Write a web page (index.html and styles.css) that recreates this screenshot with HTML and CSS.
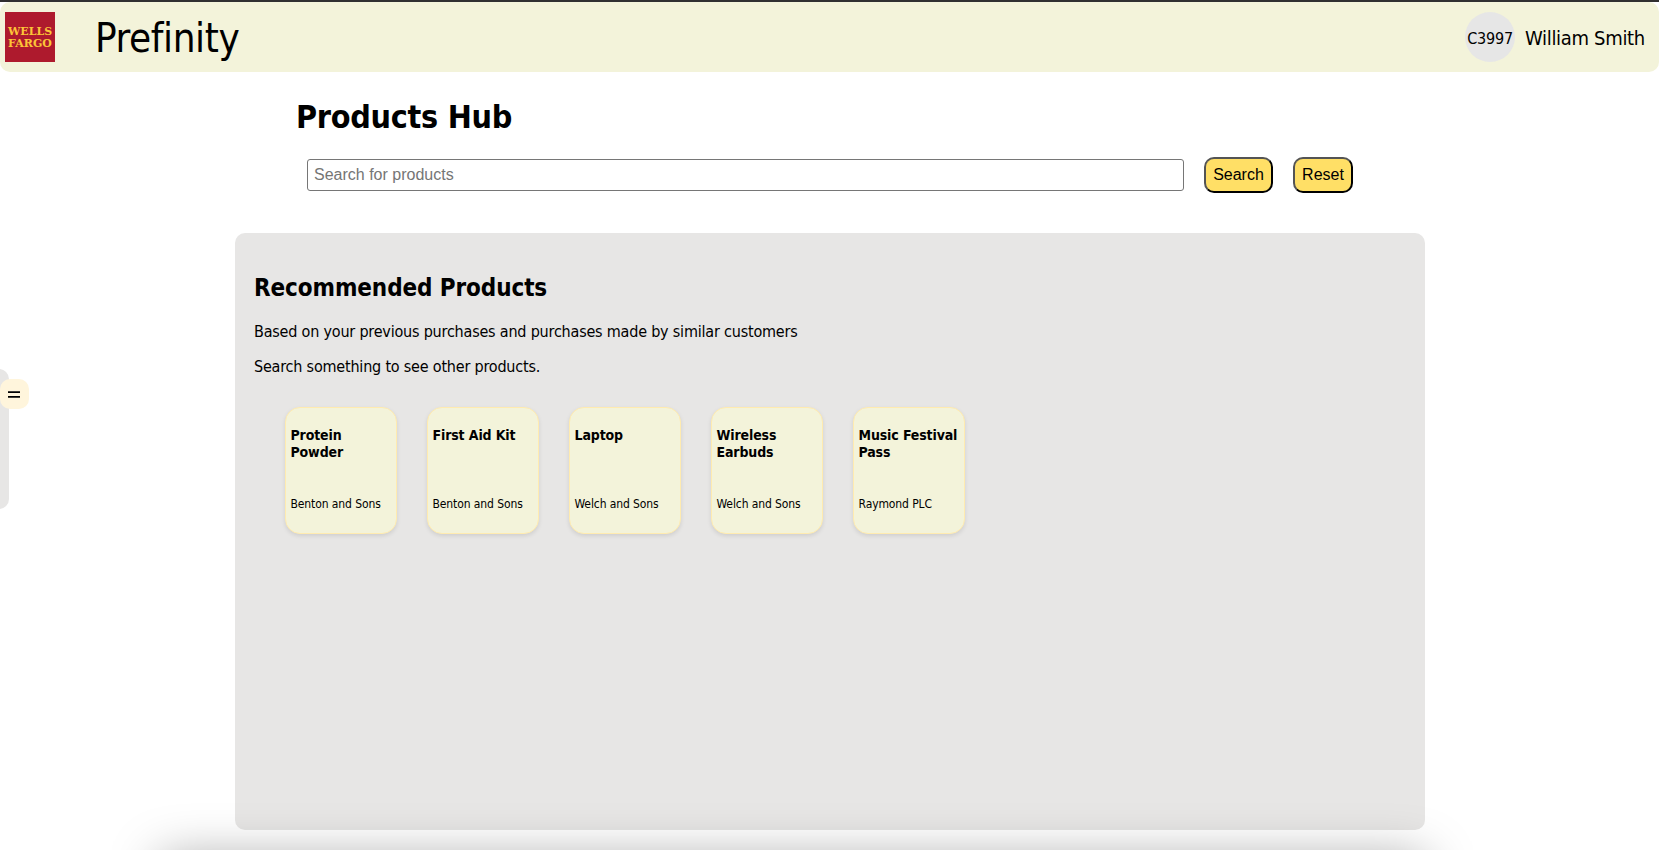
FILE: index.html
```html
<!DOCTYPE html>
<html lang="en">
<head>
<meta charset="utf-8">
<title>Prefinity</title>
<link rel="stylesheet" href="styles.css">
</head>
<body>
<div class="page">
<header class="header">
  <div class="logo"><span class="logo-line">WELLS</span><span class="logo-line">FARGO</span></div>
  <div class="brand">Prefinity</div>
  <div class="user">
    <div class="avatar"><span class="avatar-id">C3997</span></div>
    <div class="user-name">William Smith</div>
  </div>
</header>
<aside class="drawer"><button class="drawer-toggle" aria-label="Menu"><svg width="12" height="8" viewBox="0 0 12 8"><path d="M0 1.2H12M0 5.9H12" stroke="#000" stroke-width="1.7"/></svg></button></aside>
<main class="main">
  <h1 class="title">Products Hub</h1>
  <form class="search">
    <input class="search-input" type="text" placeholder="Search for products">
    <button class="btn btn-search" type="button">Search</button>
    <button class="btn btn-reset" type="button">Reset</button>
  </form>
  <section class="panel">
    <h2 class="panel-title">Recommended Products</h2>
    <p class="text based">Based on your previous purchases and purchases made by similar customers</p>
    <p class="text">Search something to see other products.</p>
    <div class="cards">
      <article class="card"><h3 class="card-title">Protein Powder</h3><p class="vendor">Benton and Sons</p></article>
      <article class="card"><h3 class="card-title">First Aid Kit</h3><p class="vendor">Benton and Sons</p></article>
      <article class="card"><h3 class="card-title">Laptop</h3><p class="vendor">Welch and Sons</p></article>
      <article class="card"><h3 class="card-title">Wireless Earbuds</h3><p class="vendor">Welch and Sons</p></article>
      <article class="card"><h3 class="card-title">Music Festival Pass</h3><p class="vendor">Raymond PLC</p></article>
    </div>
  </section>
</main>
<div class="bottom-shade"></div>
</div>
</body>
</html>
```
FILE: styles.css
```css
* { box-sizing: border-box; }
body { margin: 0; }
.page {
  height: 850px;
  overflow: hidden;
  position: relative;
  border-top: 2px solid #302f30;
  background: #fff;
  color: #000;
  font-family: "DejaVu Sans Condensed", "DejaVu Sans", sans-serif;
  font-stretch: condensed;
}
.header {
  display: flex;
  align-items: center;
  height: 70px;
  padding: 0 15px 0 5px;
  border-radius: 10px;
  background: #f3f3da;
}
.logo {
  display: flex;
  flex-direction: column;
  align-items: center;
  justify-content: center;
  width: 50px;
  height: 50px;
  padding-top: 2px;
  background: #ae1a2d;
  color: #fcc438;
  font: bold 11px/12px "DejaVu Serif", serif;
}
.brand { margin-left: 40px; padding-top: 2px; font-size: 40px; line-height: 48px; letter-spacing: -0.4px; }
.user { display: flex; align-items: center; gap: 10px; margin-left: auto; }
.avatar {
  display: flex;
  align-items: center;
  justify-content: center;
  width: 50px;
  height: 50px;
  border-radius: 50%;
  background: #e6e6e6;
  font-size: 16px;
  letter-spacing: -0.2px;
}
.avatar-id { padding-top: 2px; }
.user-name { padding-top: 1px; font-size: 20px; width: 119px; white-space: nowrap; letter-spacing: -0.32px; }
.drawer {
  position: absolute;
  left: -11px;
  top: 367px;
  width: 20px;
  height: 140px;
  border-radius: 10px;
  background: #e7e6e5;
}
.drawer-toggle {
  position: absolute;
  left: 11px;
  top: 10px;
  display: flex;
  align-items: center;
  width: 29px;
  height: 30px;
  padding: 2px 0 0 8px;
  border: 0;
  border-radius: 10px;
  background: #fff5dc;
}
.main { width: 1190px; margin-left: 235px; }
.title { margin: 0; padding: 26px 0 0 61px; font-size: 32px; line-height: 39px; letter-spacing: -0.28px; }
.search { display: flex; align-items: center; height: 36px; margin: 20px 0 0 72px; }
.search-input {
  width: 877px;
  height: 32px;
  margin: 0;
  padding: 0 6px;
  border: 1px solid #767676;
  border-radius: 3px;
  font: 16px "Liberation Sans", sans-serif;
}
.search-input::placeholder { color: #757575; }
.btn {
  height: 36px;
  margin-left: 20px;
  padding: 0;
  border: 2px outset #000;
  border-radius: 10px;
  background: #ffdf66;
  color: #000;
  font: 16px "Liberation Sans", sans-serif;
}
.btn-search { width: 69px; }
.btn-reset { width: 60px; }
.panel {
  height: 597px;
  margin-top: 40px;
  padding: 41px 19px;
  border-radius: 10px;
  background: #e7e6e5;
}
.panel-title { margin: 0; font-size: 24px; line-height: 29px; letter-spacing: -0.1px; }
.text { margin: 16px 0 0; font-size: 16px; line-height: 19px; letter-spacing: -0.2px; }
.based { margin-top: 19px; }
.cards { display: flex; gap: 30px; padding: 31px 31px 0; }
.card {
  display: flex;
  flex-direction: column;
  justify-content: space-between;
  width: 112px;
  height: 127px;
  padding: 19px 0 21px 4.5px;
  border: 1px solid #ffebb0;
  border-radius: 15px;
  background: #f3f3da;
  box-shadow: 0 2px 4px rgba(0, 0, 0, 0.1);
}
.card-title { margin: 0; font-size: 14px; line-height: 17px; letter-spacing: -0.13px; }
.vendor { margin: 0; font-size: 12px; line-height: 15px; white-space: nowrap; letter-spacing: -0.1px; }
.bottom-shade {
  position: absolute;
  left: 160px;
  top: 856px;
  width: 1265px;
  height: 60px;
  box-shadow: 0 0 50px rgba(0, 0, 0, 0.35);
}
```
